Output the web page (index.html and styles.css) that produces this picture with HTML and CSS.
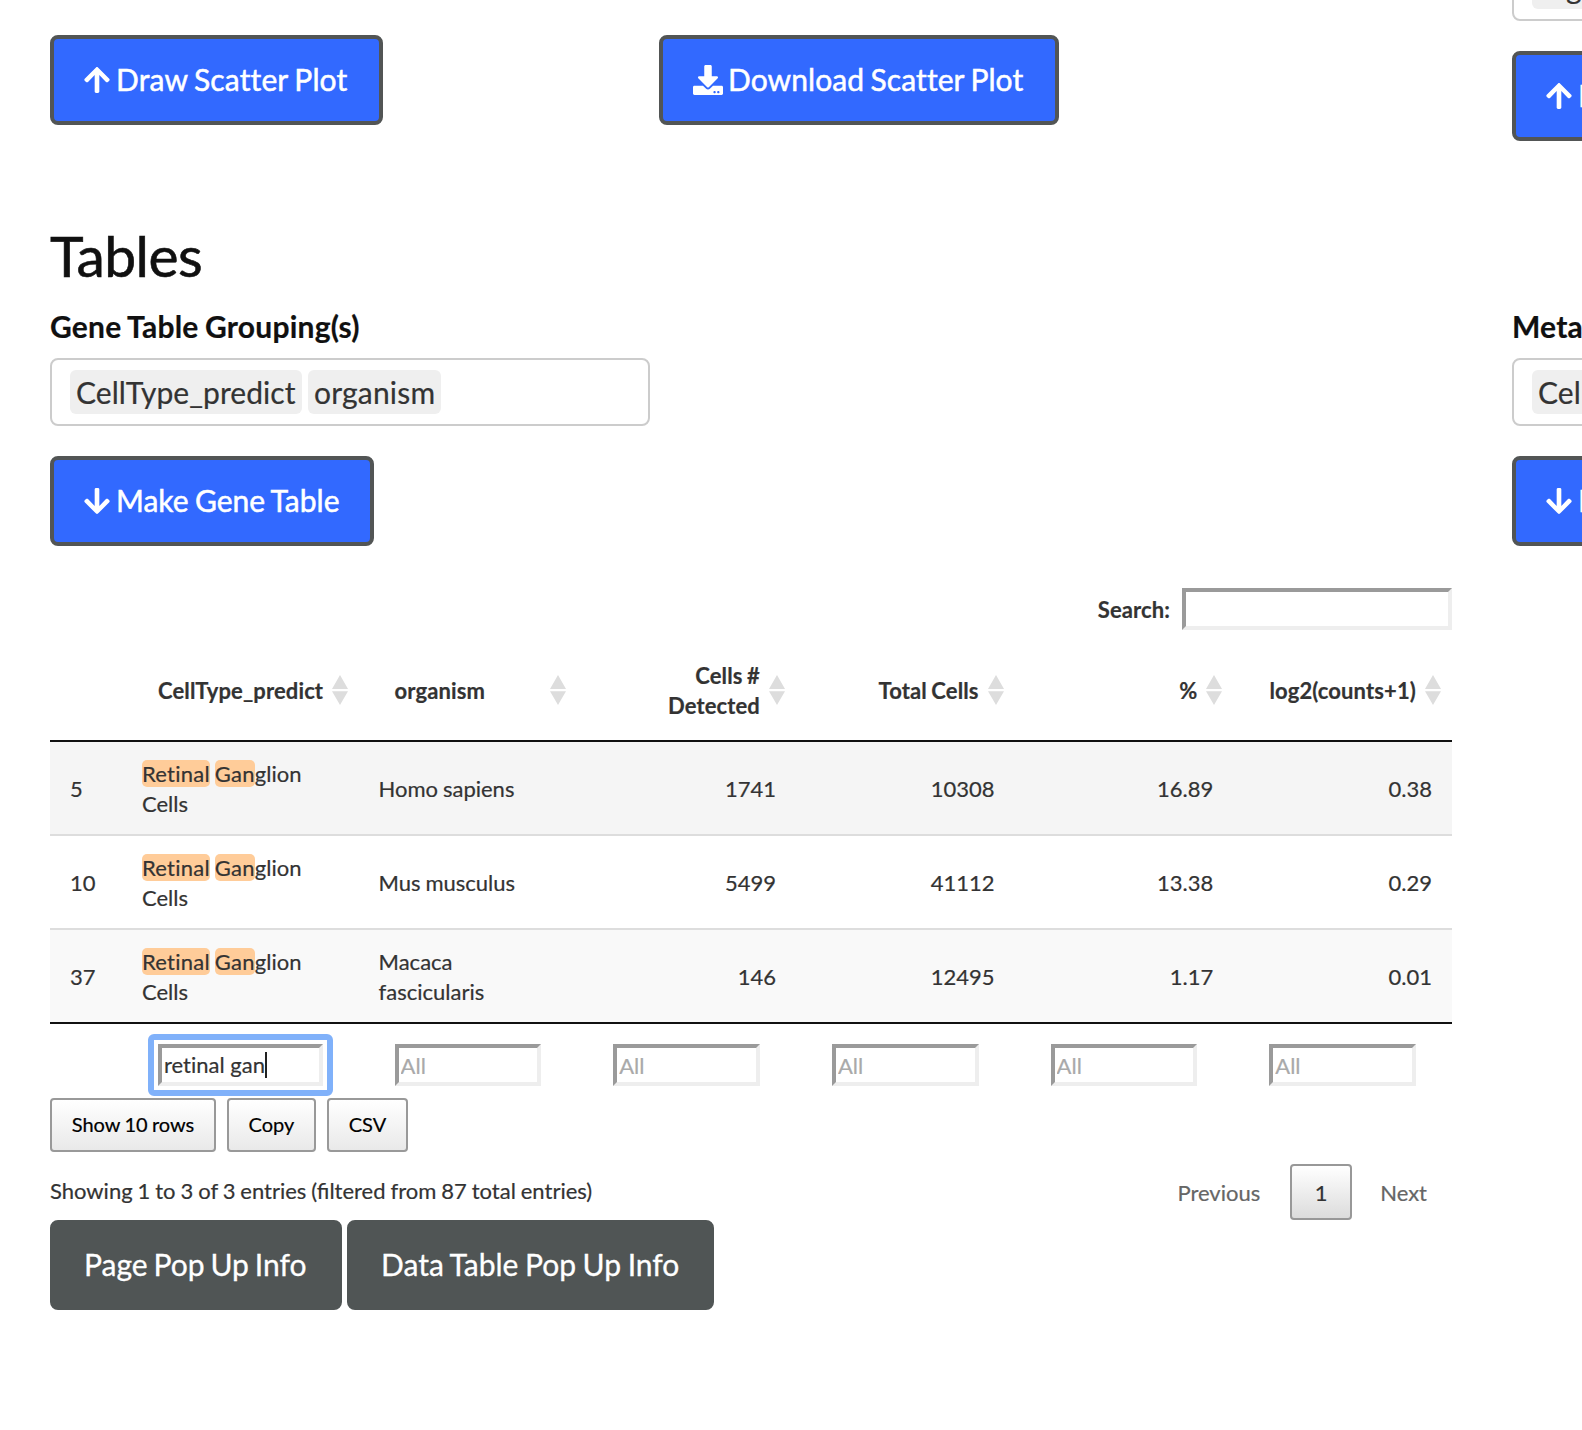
FILE: index.html
```html
<!DOCTYPE html>
<html lang="en">
<head>
<meta charset="utf-8">
<title>Tables</title>
<link rel="stylesheet" href="styles.css">
</head>
<body>
<svg class="defs" width="0" height="0">
  <symbol id="up" viewBox="0 0 448 512"><path d="M34.9 289.5l-22.2-22.2c-9.4-9.4-9.4-24.6 0-33.9L207 39c9.4-9.4 24.6-9.4 33.9 0l194.3 194.3c9.4 9.4 9.4 24.6 0 33.9L413 289.4c-9.5 9.5-25 9.3-34.3-.4L264 168.6V456c0 13.3-10.7 24-24 24h-32c-13.3 0-24-10.7-24-24V168.6L69.2 289.1c-9.3 9.8-24.8 10-34.3.4z"/></symbol>
  <symbol id="down" viewBox="0 0 448 512"><path d="M413.1 222.5l22.2 22.2c9.4 9.4 9.4 24.6 0 33.9L241 473c-9.4 9.4-24.6 9.4-33.9 0L12.7 278.6c-9.4-9.4-9.4-24.6 0-33.9l22.2-22.2c9.5-9.5 25-9.3 34.3.4L184 343.4V56c0-13.3 10.7-24 24-24h32c13.3 0 24 10.7 24 24v287.4l114.8-120.5c9.3-9.8 24.8-10 34.3-.4z"/></symbol>
  <symbol id="download" viewBox="0 0 512 512"><path d="M216 0h80c13.3 0 24 10.7 24 24v168h87.7c17.8 0 26.7 21.5 14.1 34.1L269.7 378.3c-7.5 7.5-19.8 7.5-27.3 0L90.1 226.1c-12.6-12.6-3.7-34.1 14.1-34.1H192V24c0-13.3 10.7-24 24-24zm296 376v112c0 13.3-10.7 24-24 24H24c-13.3 0-24-10.7-24-24V376c0-13.3 10.7-24 24-24h146.7l49 49c20.1 20.1 52.5 20.1 72.6 0l49-49H488c13.3 0 24 10.7 24 24zm-124 88c0-11-9-20-20-20s-20 9-20 20 9 20 20 20 20-9 20-20zm64 0c0-11-9-20-20-20s-20 9-20 20 9 20 20 20 20-9 20-20z"/></symbol>
  <symbol id="sort" viewBox="0 0 16 30"><path d="M8 0L16 14H0zM0 16.3H16L8 30z"/></symbol>
</svg>
<main class="page">
  <div class="left">
    <div class="plot-actions">
      <button class="btn primary draw"><svg class="arrow"><use href="#up"/></svg><span>Draw Scatter Plot</span></button>
      <button class="btn primary download"><svg class="tray"><use href="#download"/></svg><span>Download Scatter Plot</span></button>
    </div>
    <h2>Tables</h2>
    <div class="label">Gene Table Grouping(s)</div>
    <div class="select"><span class="item">CellType_predict</span><span class="item organism">organism</span></div>
    <button class="btn primary make"><svg class="arrow"><use href="#down"/></svg><span>Make Gene Table</span></button>

    <div class="filter"><label for="search">Search:</label><input id="search" type="text"></div>
    <table>
      <colgroup><col class="c-id"><col class="c-type"><col><col><col><col><col></colgroup>
      <thead>
        <tr>
          <th></th>
          <th>CellType_predict<svg class="sort"><use href="#sort"/></svg></th>
          <th>organism<svg class="sort"><use href="#sort"/></svg></th>
          <th class="num">Cells # Detected<svg class="sort"><use href="#sort"/></svg></th>
          <th class="num">Total Cells<svg class="sort"><use href="#sort"/></svg></th>
          <th class="num">%<svg class="sort"><use href="#sort"/></svg></th>
          <th class="num">log2(counts+1)<svg class="sort"><use href="#sort"/></svg></th>
        </tr>
      </thead>
      <tbody>
        <tr><td>5</td><td><em>Retinal</em> <em>Gan</em>glion Cells</td><td>Homo sapiens</td><td class="num">1741</td><td class="num">10308</td><td class="num">16.89</td><td class="num">0.38</td></tr>
        <tr><td>10</td><td><em>Retinal</em> <em>Gan</em>glion Cells</td><td>Mus musculus</td><td class="num">5499</td><td class="num">41112</td><td class="num">13.38</td><td class="num">0.29</td></tr>
        <tr><td>37</td><td><em>Retinal</em> <em>Gan</em>glion Cells</td><td>Macaca fascicularis</td><td class="num">146</td><td class="num">12495</td><td class="num">1.17</td><td class="num">0.01</td></tr>
      </tbody>
      <tfoot>
        <tr>
          <td></td>
          <td><div class="field focused">retinal gan<i class="caret"></i></div></td>
          <td><input type="text" placeholder="All"></td>
          <td><input type="text" placeholder="All"></td>
          <td><input type="text" placeholder="All"></td>
          <td><input type="text" placeholder="All"></td>
          <td><input type="text" placeholder="All"></td>
        </tr>
      </tfoot>
    </table>
    <div class="tools"><button class="tool rows">Show 10 rows</button><button class="tool copy">Copy</button><button class="tool csv">CSV</button></div>
    <div class="status">
      <div class="info">Showing 1 to 3 of 3 entries (filtered from 87 total entries)</div>
      <div class="pager"><span class="step">Previous</span><span class="current">1</span><span class="step">Next</span></div>
    </div>
    <div class="popups"><button class="btn dark page-info">Page Pop Up Info</button><button class="btn dark table-info">Data Table Pop Up Info</button></div>
  </div>
  <div class="right">
    <div class="select top"><span class="item organism">organism</span></div>
    <button class="btn primary"><svg class="arrow"><use href="#up"/></svg><span>Draw Dot Plot</span></button>
    <div class="label">Metadata Table Grouping(s)</div>
    <div class="select"><span class="item">CellType_predict</span></div>
    <button class="btn primary"><svg class="arrow"><use href="#down"/></svg><span>Make Meta Table</span></button>
  </div>
</main>
</body>
</html>
```
FILE: styles.css
```css
* { box-sizing: border-box; }
html, body { height: 100%; overflow: hidden; }
body {
  margin: 0;
  background: #fff;
  color: #333;
  font-family: Lato, "Liberation Sans", sans-serif;
  font-size: 30px;
  line-height: 44px;
  font-variant-ligatures: none;
  -webkit-text-stroke: 0.2px;
}
.defs { position: absolute; }
.page {
  display: grid;
  grid-template-columns: 1402px 70px;
  column-gap: 60px;
  padding-left: 50px;
}
.left { padding-top: 35px; }

.btn {
  display: inline-flex;
  align-items: center;
  height: 90px;
  padding: 0 30px;
  border: 4px solid #525555;
  border-radius: 8px;
  color: #fff;
  font: 400 30px/44px Lato, "Liberation Sans", sans-serif;
  font-variant-ligatures: none;
  word-spacing: -1.3px;
  white-space: nowrap;
  -webkit-text-stroke: 0.5px;
}
.btn span { padding-bottom: 2px; }
.primary { background: #3269ff; gap: 6px; }
.dark { padding-bottom: 2px; background: #505555; border-color: #505555; -webkit-text-stroke: 0.3px; }
.arrow, .tray { height: 30px; fill: #fff; flex: none; }
.arrow { width: 26px; }
.tray { width: 30px; }
.draw { width: 333px; letter-spacing: 0.14px; }
.download { width: 400px; gap: 5px; letter-spacing: 0.08px; }
.make { width: 324px; }

.plot-actions { display: grid; grid-template-columns: 609px auto; justify-items: start; justify-content: start; }
h2 {
  margin: 95px 0 0;
  height: 70px;
  color: #101010;
  font-size: 57px;
  font-weight: 400;
  letter-spacing: -0.6px;
  line-height: 70px;
  -webkit-text-stroke: 0.6px;
}
.label {
  margin-top: 14px;
  color: #101010;
  font-weight: 700;
  letter-spacing: 0.22px;
  word-spacing: -1px;
  white-space: nowrap;
}
.select {
  display: flex;
  align-items: center;
  gap: 6px;
  width: 600px;
  height: 68px;
  margin: 10px 0 30px;
  padding-left: 18px;
  border: 2px solid #ccc;
  border-radius: 8px;
}
.item {
  flex: none;
  width: 232px;
  height: 44px;
  padding: 0 6px;
  border-radius: 6px;
  background: #efefef;
  letter-spacing: 0.06px;
}
.organism { width: 133px; letter-spacing: 0.2px; }

.filter {
  display: flex;
  justify-content: flex-end;
  align-items: center;
  gap: 12px;
  margin: 42px 0 10px;
  font-size: 22px;
  font-weight: 700;
  letter-spacing: 0.1px;
  line-height: 30px;
}
.filter label { padding-top: 2px; }
input, .field {
  display: block;
  width: 100%;
  height: 42px;
  padding: 2px;
  border: 4px solid;
  border-color: #9a9a9a #eee #eee #9a9a9a;
  border-radius: 0;
  background: #fff;
  color: #333;
  font: 400 22px/30px Lato, "Liberation Sans", sans-serif;
  font-variant-ligatures: none;
}
.filter input { width: 270px; }
input::placeholder { color: #a9a9a9; opacity: 1; }
.focused {
  position: relative;
  display: flex;
  align-items: center;
  white-space: nowrap;
}
.focused::after {
  content: "";
  position: absolute;
  inset: -14px;
  border: 6px solid #80b1fa;
  border-radius: 6px;
}
.caret { width: 2px; height: 26px; background: #222; }

table {
  width: 1402px;
  table-layout: fixed;
  border-collapse: separate;
  border-spacing: 0;
  font-size: 22px;
  line-height: 30px;
}
.c-id { width: 72px; }
.c-type { width: 236.6px; }
th {
  position: relative;
  height: 102px;
  padding: 21px 36px 19px;
  border-bottom: 2px solid #111;
  text-align: left;
  vertical-align: middle;
  letter-spacing: 0.12px;
  word-spacing: -1px;
}
.num { text-align: right; }
.sort { position: absolute; right: 11px; top: 35px; width: 16px; height: 30px; fill: #ddd; }
tbody td { height: 94px; padding: 17px 20px 15px; border-bottom: 2px solid #ddd; word-spacing: -0.8px; }
tbody tr:nth-child(1) { background: #f5f5f5; }
tbody tr:nth-child(3) { background: #f9f9f9; }
tbody tr:last-child td { border-bottom-color: #111; }
em { border-radius: 5px; background: #ffcc99; font-style: normal; letter-spacing: 0.25px; }
tfoot td { padding: 20px 36px 12px; }

.tools { display: flex; gap: 11px; }
.tool {
  height: 54px;
  padding: 0 0 2px;
  border: 2px solid #999;
  border-radius: 4px;
  background: linear-gradient(#fff, #e9e9e9);
  color: #000;
  font: 400 20px/30px Lato, "Liberation Sans", sans-serif;
  word-spacing: -0.8px;
}
.rows { width: 166px; }
.copy { width: 89px; }
.csv { width: 81px; }
.status { display: flex; justify-content: space-between; height: 68px; font-size: 22px; line-height: 30px; }
.info { padding-top: 24px; font-variant-ligatures: normal; word-spacing: -0.7px; }
.pager { display: flex; align-items: center; height: 56px; margin: 12px 25px 0 0; }
.current {
  width: 62px;
  height: 56px;
  margin: 0 28px 0 30px;
  border: 2px solid #989898;
  border-radius: 4px;
  background: linear-gradient(#fff, #dcdcdc);
  line-height: 54px;
  text-align: center;
}
.step { padding-top: 2px; color: #666; }
.popups { display: flex; gap: 5px; }
.page-info { width: 292px; word-spacing: -1.8px; }
.table-info { width: 367px; word-spacing: -1.1px; }

.right .top { margin: -47px 0 30px; }
.right .label { margin-top: 163px; }
.right .btn { width: 340px; }
```
